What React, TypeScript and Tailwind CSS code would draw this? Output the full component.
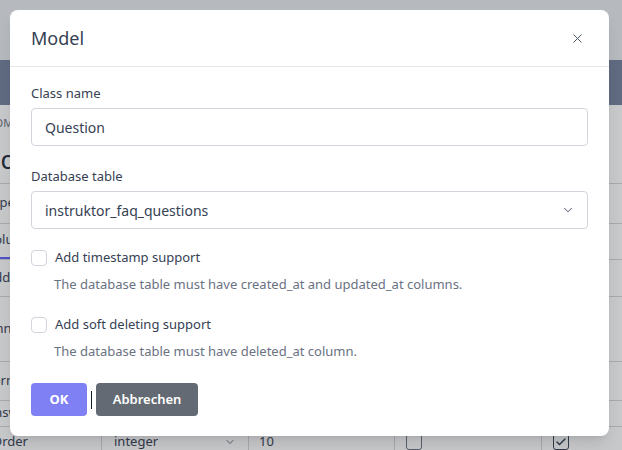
import { X, ChevronDown, Check } from "lucide-react";

const ROWS = [
  { name: "Type", h: "h-[40px]" },
  { name: "Column", h: "h-[36px]", tab: true },
  { name: "Add field", h: "h-[37px]" },
  { name: "Unnr", h: "h-[65px]" },
  { name: "Form", h: "h-[39px]" },
  { name: "Answer", h: "h-[26px]" },
];

function BackgroundPage() {
  return (
    <div className="flex h-full w-full flex-col bg-white font-['Noto_Sans',sans-serif] text-gray-700">
      <div className="h-[60px] shrink-0 bg-[#e8ecf1]" />
      <div className="h-[45px] shrink-0 bg-[#74829e]" />
      <div className="ml-[-14px] flex flex-col">
        <p className="mt-[10px] text-[11px] uppercase tracking-wide text-gray-500">Home Nav</p>
        <h1 className="mt-[10px] text-[26px] leading-[34px] text-gray-800">Edit</h1>
        <div className="mt-[7px] border-b border-gray-300" />
        {ROWS.map((r) => (
          <div
            key={r.name}
            className={`flex items-end border-b border-gray-300 text-[13px] ${r.h}`}
          >
            <span
              className={`flex h-full w-[115px] shrink-0 items-center ${
                r.tab ? "border-b-2 border-indigo-500 w-[24px]" : ""
              }`}
            >
              {r.name}
            </span>
          </div>
        ))}
        <div className="flex h-[30px] items-center text-[13px]">
          <span className="w-[115px] shrink-0 pl-[6px]">Order</span>
          <div className="flex h-full w-[147px] shrink-0 items-center justify-between border-l border-gray-300 px-[12px]">
            <span>integer</span>
            <ChevronDown className="h-3 w-3 text-gray-500" />
          </div>
          <div className="flex h-full w-[146px] shrink-0 items-center border-l border-gray-300 px-[10px]">
            <span>10</span>
          </div>
          <div className="flex h-full w-[147px] shrink-0 items-center border-l border-gray-300 px-[11px]">
            <span className="h-[16px] w-[16px] rounded-[3px] border border-gray-500" />
          </div>
          <div className="flex h-full w-[120px] shrink-0 items-center border-l border-gray-300 px-[11px]">
            <span className="flex h-[16px] w-[16px] items-center justify-center rounded-[3px] border border-gray-700">
              <Check className="h-3 w-3" strokeWidth={3} />
            </span>
          </div>
        </div>
      </div>
    </div>
  );
}

function Checkbox({ label, help }: { label: string; help: string }) {
  return (
    <div className="flex flex-col">
      <label className="flex h-[20px] items-center gap-[8px] text-[13px] text-gray-700">
        <span className="h-[16px] w-[16px] rounded-[4px] border border-gray-300 bg-white" />
        {label}
      </label>
      <p className="mt-[6px] pl-[23px] text-[13px] leading-[20px] text-gray-500">{help}</p>
    </div>
  );
}

export default function App() {
  return (
    <div className="relative h-[450px] w-[622px] overflow-hidden">
      <BackgroundPage />
      <div className="absolute inset-0 bg-[rgba(40,44,52,0.26)]" />

      <div className="absolute left-[10px] top-[10px] w-[599px] rounded-[8px] bg-white font-['Noto_Sans',sans-serif] shadow-lg">
        <div className="flex h-[57px] items-center justify-between border-b border-gray-200 pl-[21px] pr-[24px]">
          <h2 className="text-[18px] text-gray-700">Model</h2>
          <X className="h-[15px] w-[15px] text-gray-600" strokeWidth={1.6} />
        </div>

        <div className="flex flex-col px-[21px] pb-[20px] pt-[16px]">
          <label className="text-[13px] leading-[20px] text-gray-700">Class name</label>
          <div className="mt-[5px] flex h-[38px] items-center rounded-[4px] border border-gray-300 px-[13px] text-[14px] text-gray-700">
            Question
          </div>

          <label className="mt-[20px] text-[13px] leading-[20px] text-gray-700">Database table</label>
          <div className="mt-[5px] flex h-[38px] items-center justify-between rounded-[4px] border border-gray-300 pl-[13px] pr-[12px] text-[14px] text-gray-700">
            <span>instruktor_faq_questions</span>
            <ChevronDown className="h-[14px] w-[14px] text-gray-500" strokeWidth={1.8} />
          </div>

          <div className="mt-[19px] flex flex-col gap-[21px]">
            <Checkbox
              label="Add timestamp support"
              help="The database table must have created_at and updated_at columns."
            />
            <Checkbox
              label="Add soft deleting support"
              help="The database table must have deleted_at column."
            />
          </div>

          <div className="mt-[22px] flex items-center">
            <button
              type="button"
              className="h-[33px] w-[56px] rounded-[4px] bg-[#8080f5] text-[13px] font-bold text-white"
            >
              OK
            </button>
            <span className="mx-[4px] h-[18px] w-px bg-gray-900" />
            <button
              type="button"
              className="h-[33px] w-[102px] rounded-[4px] bg-[#646a73] text-[13px] font-semibold text-white"
            >
              Abbrechen
            </button>
          </div>
        </div>
      </div>
    </div>
  );
}
